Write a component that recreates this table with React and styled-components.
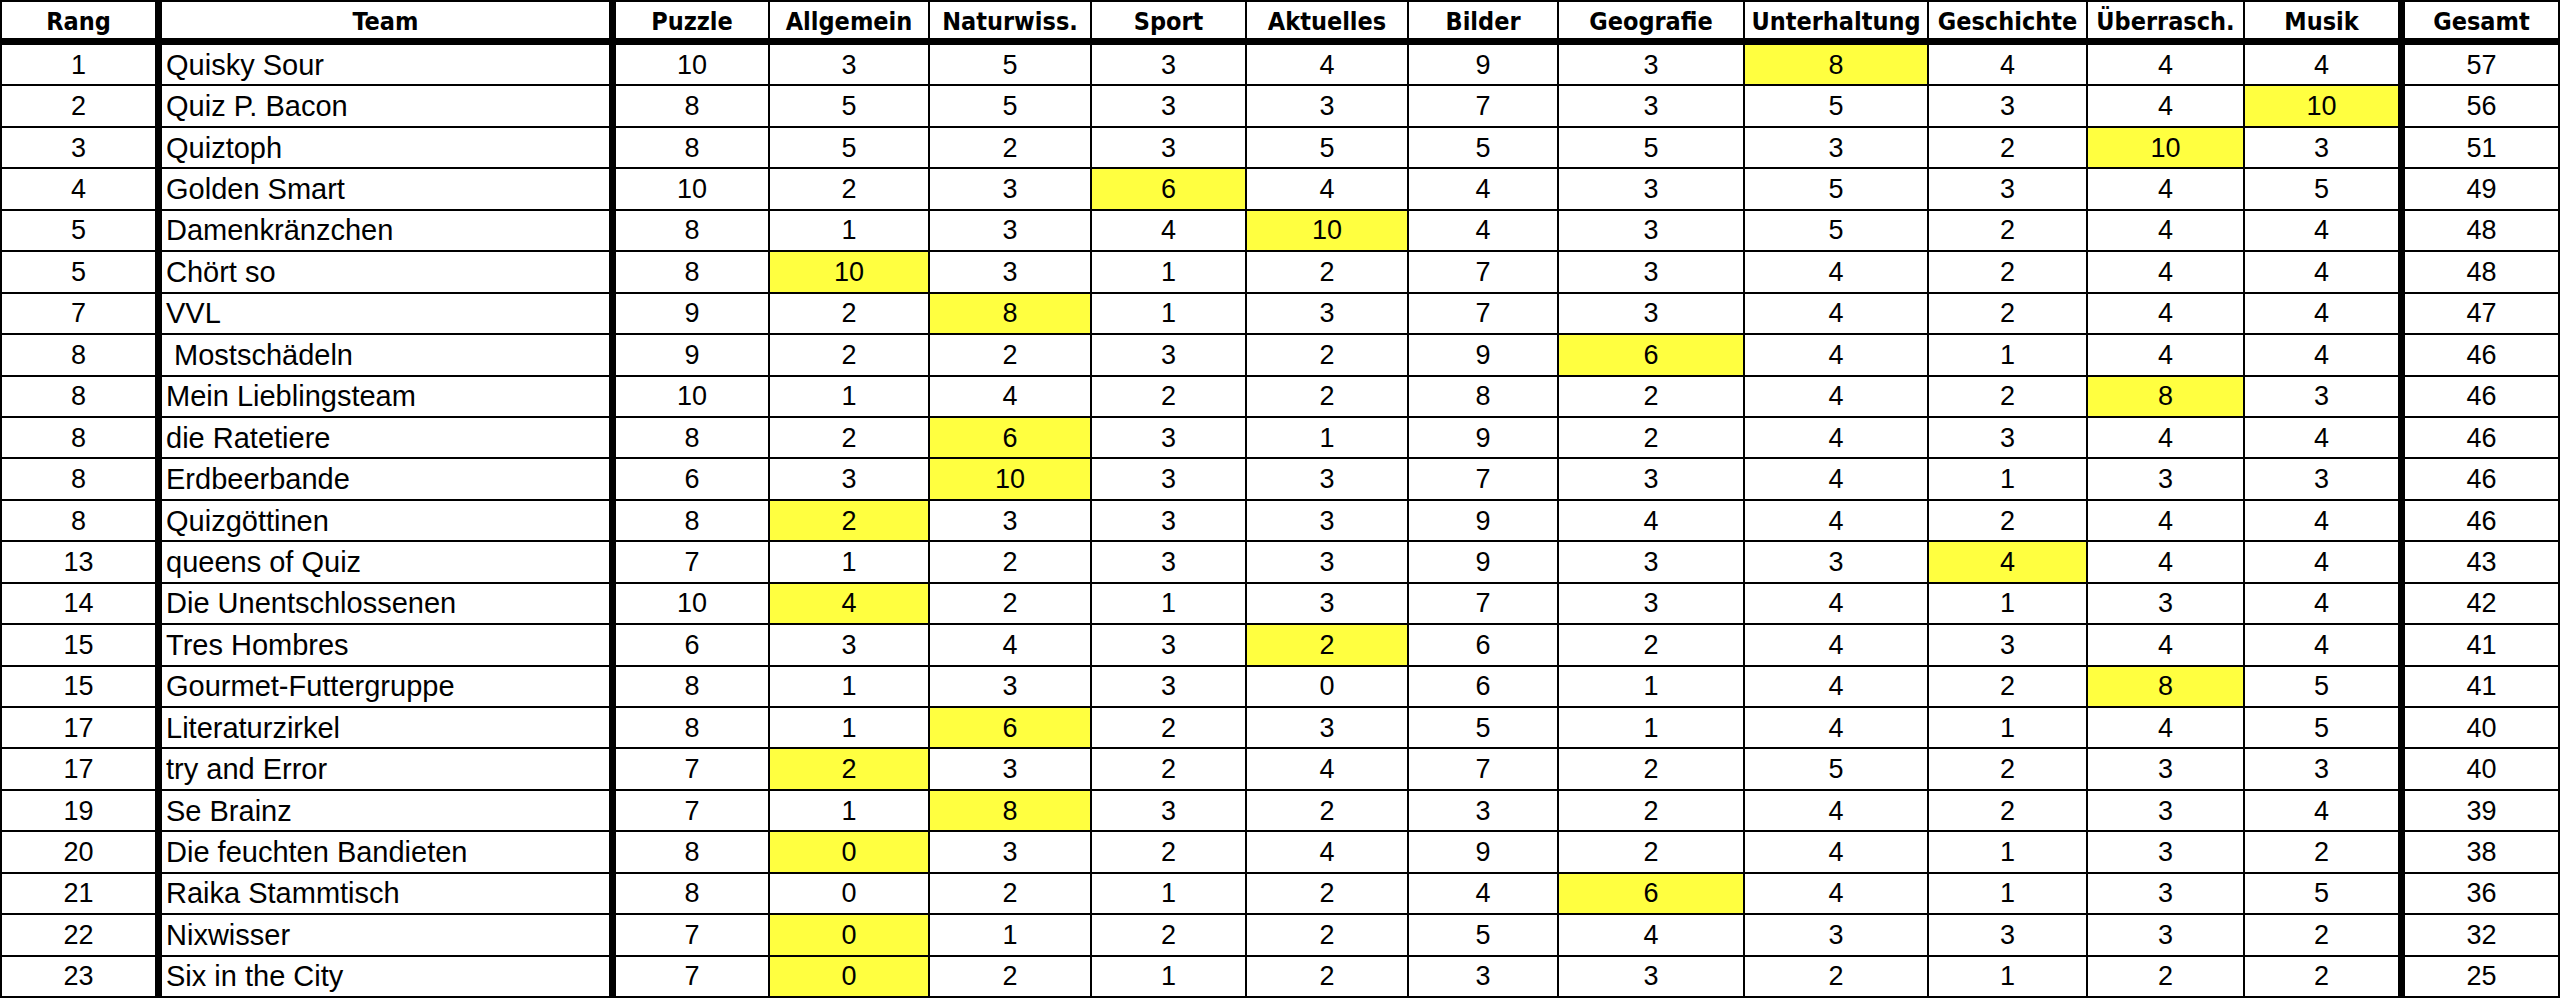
import React from "react";
import styled, { createGlobalStyle } from "styled-components";

const GlobalStyle = createGlobalStyle`
  html, body {
    margin: 0;
    padding: 0;
    background: #ffffff;
    overflow: hidden;
  }
  #root {
    width: 2560px;
    height: 998px;
  }
`;

const COLUMNS = [
  { key: "rang", label: "Rang", width: 160, thick: true },
  { key: "team", label: "Team", width: 454, thick: true },
  { key: "puzzle", label: "Puzzle", width: 154 },
  { key: "allg", label: "Allgemein", width: 160 },
  { key: "natur", label: "Naturwiss.", width: 162 },
  { key: "sport", label: "Sport", width: 155 },
  { key: "akt", label: "Aktuelles", width: 162 },
  { key: "bilder", label: "Bilder", width: 150 },
  { key: "geo", label: "Geografie", width: 186 },
  { key: "unter", label: "Unterhaltung", width: 184 },
  { key: "gesch", label: "Geschichte", width: 159 },
  { key: "ueber", label: "Überrasch.", width: 157 },
  { key: "musik", label: "Musik", width: 160, thick: true },
  { key: "gesamt", label: "Gesamt", width: 155 },
];

const TEMPLATE = COLUMNS.map((c) => `${c.width}px`).join(" ");

// [rang, team, scores (11), highlighted score index, total]
const DATA = [
  [1, "Quisky Sour", [10, 3, 5, 3, 4, 9, 3, 8, 4, 4, 4], 7, 57],
  [2, "Quiz P. Bacon", [8, 5, 5, 3, 3, 7, 3, 5, 3, 4, 10], 10, 56],
  [3, "Quiztoph", [8, 5, 2, 3, 5, 5, 5, 3, 2, 10, 3], 9, 51],
  [4, "Golden Smart", [10, 2, 3, 6, 4, 4, 3, 5, 3, 4, 5], 3, 49],
  [5, "Damenkränzchen", [8, 1, 3, 4, 10, 4, 3, 5, 2, 4, 4], 4, 48],
  [5, "Chört so", [8, 10, 3, 1, 2, 7, 3, 4, 2, 4, 4], 1, 48],
  [7, "VVL", [9, 2, 8, 1, 3, 7, 3, 4, 2, 4, 4], 2, 47],
  [8, "\u00a0Mostschädeln", [9, 2, 2, 3, 2, 9, 6, 4, 1, 4, 4], 6, 46],
  [8, "Mein Lieblingsteam", [10, 1, 4, 2, 2, 8, 2, 4, 2, 8, 3], 9, 46],
  [8, "die Ratetiere", [8, 2, 6, 3, 1, 9, 2, 4, 3, 4, 4], 2, 46],
  [8, "Erdbeerbande", [6, 3, 10, 3, 3, 7, 3, 4, 1, 3, 3], 2, 46],
  [8, "Quizgöttinen", [8, 2, 3, 3, 3, 9, 4, 4, 2, 4, 4], 1, 46],
  [13, "queens of Quiz", [7, 1, 2, 3, 3, 9, 3, 3, 4, 4, 4], 8, 43],
  [14, "Die Unentschlossenen", [10, 4, 2, 1, 3, 7, 3, 4, 1, 3, 4], 1, 42],
  [15, "Tres Hombres", [6, 3, 4, 3, 2, 6, 2, 4, 3, 4, 4], 4, 41],
  [15, "Gourmet-Futtergruppe", [8, 1, 3, 3, 0, 6, 1, 4, 2, 8, 5], 9, 41],
  [17, "Literaturzirkel", [8, 1, 6, 2, 3, 5, 1, 4, 1, 4, 5], 2, 40],
  [17, "try and Error", [7, 2, 3, 2, 4, 7, 2, 5, 2, 3, 3], 1, 40],
  [19, "Se Brainz", [7, 1, 8, 3, 2, 3, 2, 4, 2, 3, 4], 2, 39],
  [20, "Die feuchten Bandieten", [8, 0, 3, 2, 4, 9, 2, 4, 1, 3, 2], 1, 38],
  [21, "Raika Stammtisch", [8, 0, 2, 1, 2, 4, 6, 4, 1, 3, 5], 6, 36],
  [22, "Nixwisser", [7, 0, 1, 2, 2, 5, 4, 3, 3, 3, 2], 1, 32],
  [23, "Six in the City", [7, 0, 2, 1, 2, 3, 3, 2, 1, 2, 2], 1, 25],
];

const Sheet = styled.div`
  box-sizing: border-box;
  width: 2560px;
  height: 998px;
  display: flex;
  flex-direction: column;
  border-top: 2px solid #000;
  border-left: 2px solid #000;
  background: #fff;
  color: #000;
`;

const HeaderRow = styled.div`
  box-sizing: border-box;
  flex: 0 0 43px;
  display: grid;
  grid-template-columns: ${TEMPLATE};
  border-bottom: 7px solid #000;
`;

const DataRow = styled.div`
  box-sizing: border-box;
  flex: 1 1 0;
  min-height: 0;
  display: grid;
  grid-template-columns: ${TEMPLATE};
  border-bottom: 2px solid #000;
`;

const BaseCell = styled.div`
  box-sizing: border-box;
  display: flex;
  align-items: center;
  justify-content: center;
  min-width: 0;
  overflow: hidden;
  white-space: pre;
  border-right: ${(p) => (p.$thick ? 7 : 2)}px solid #000;
  line-height: 1;
`;

const HeaderCell = styled(BaseCell)`
  font-family: "DejaVu Sans Condensed", "DejaVu Sans", sans-serif;
  font-stretch: condensed;
  font-weight: 700;
  font-size: 25px;
  padding-top: 2px;
`;

const NumCell = styled(BaseCell)`
  font-family: "Liberation Sans", Arial, sans-serif;
  font-size: 27px;
  padding-top: 1px;
  background: ${(p) => (p.$hl ? "#ffff40" : "#ffffff")};
`;

const TeamCell = styled(BaseCell)`
  justify-content: flex-start;
  padding-left: 4px;
  font-family: "Liberation Sans", Arial, sans-serif;
  font-size: 29px;
  padding-top: 1px;
`;

export default function App() {
  return (
    <>
      <GlobalStyle />
      <Sheet>
        <HeaderRow>
          {COLUMNS.map((c) => (
            <HeaderCell key={c.key} $thick={c.thick}>
              {c.label}
            </HeaderCell>
          ))}
        </HeaderRow>
        {DATA.map(([rang, team, scores, hl, total], i) => (
          <DataRow key={i}>
            <NumCell $thick>{rang}</NumCell>
            <TeamCell $thick>{team}</TeamCell>
            {scores.map((s, j) => (
              <NumCell key={j} $hl={j === hl} $thick={j === 10}>
                {s}
              </NumCell>
            ))}
            <NumCell>{total}</NumCell>
          </DataRow>
        ))}
      </Sheet>
    </>
  );
}
